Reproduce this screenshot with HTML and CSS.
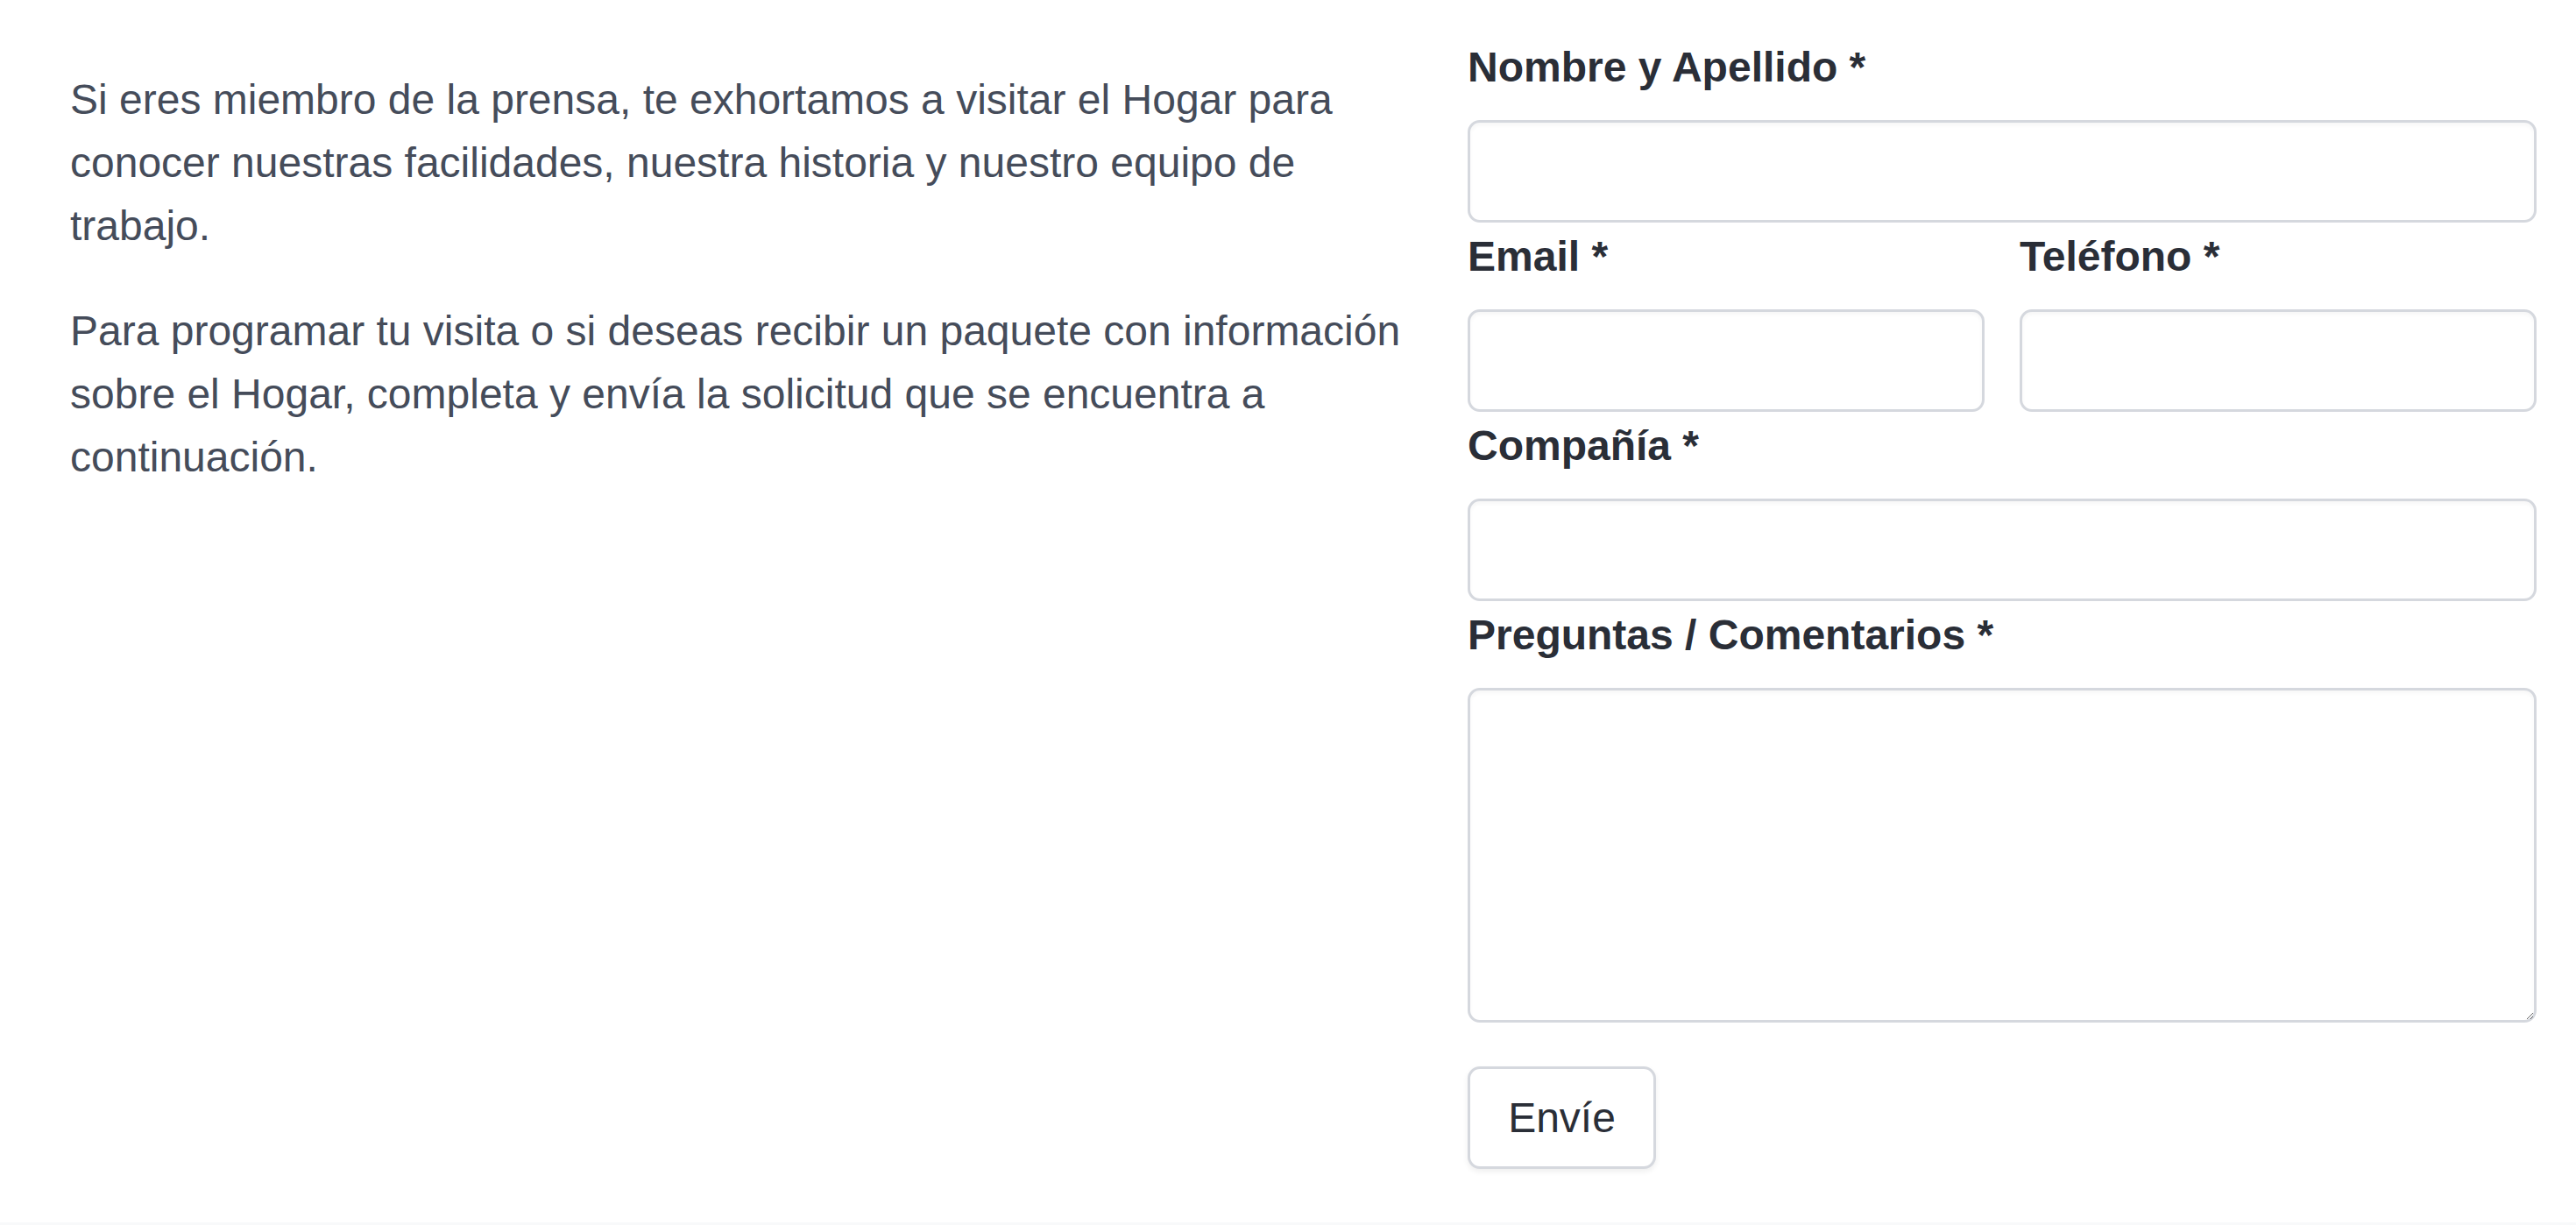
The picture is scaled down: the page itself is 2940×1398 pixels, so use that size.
FILE: index.html
```html
<!DOCTYPE html>
<html lang="es">
<head>
<meta charset="utf-8">
<title>Prensa</title>
<link rel="stylesheet" href="styles.css">
</head>
<body>
<main class="section">
  <div class="intro">
    <p>Si eres miembro de la prensa, te exhortamos a visitar el Hogar para conocer nuestras facilidades, nuestra historia y nuestro equipo de trabajo.</p>
    <p>Para programar tu visita o si deseas recibir un paquete con información sobre el Hogar, completa y envía la solicitud que se encuentra a continuación.</p>
  </div>
  <form class="form" onsubmit="return false;">
    <div class="field">
      <label class="label" for="nombre">Nombre y Apellido *</label>
      <input class="input" id="nombre" type="text">
    </div>
    <div class="row">
      <div class="field">
        <label class="label" for="email">Email *</label>
        <input class="input" id="email" type="email">
      </div>
      <div class="field">
        <label class="label" for="tel">Teléfono *</label>
        <input class="input" id="tel" type="tel">
      </div>
    </div>
    <div class="field">
      <label class="label" for="comp">Compañía *</label>
      <input class="input" id="comp" type="text">
    </div>
    <div class="field">
      <label class="label" for="preg">Preguntas / Comentarios *</label>
      <textarea class="input textarea" id="preg"></textarea>
    </div>
    <div class="actions">
      <button class="button" type="submit">Envíe</button>
    </div>
  </form>
</main>
<footer class="footer"></footer>
</body>
</html>
```
FILE: styles.css
```css
html, body {
  margin: 0;
  padding: 0;
  background: #ffffff;
}

body {
  font-family: "Liberation Sans", Arial, Helvetica, sans-serif;
  color: #2c3039;
}

.section {
  display: flex;
  gap: 40px;
  padding: 0 45px 0 80px;
  height: 1395px;
  box-sizing: border-box;
}

.intro {
  flex: 0 0 1555px;
  padding-top: 78px;
}

.intro p {
  margin: 0 0 48px;
  font-size: 48px;
  line-height: 72px;
  color: #454c5a;
}

.form {
  flex: 0 0 1220px;
  padding-top: 41px;
  display: flex;
  flex-direction: column;
}

.field {
  display: flex;
  flex-direction: column;
  margin-bottom: 3px;
}

.row {
  display: grid;
  grid-template-columns: 1fr 1fr;
  column-gap: 40px;
}

.label {
  display: block;
  font-size: 48px;
  line-height: 72px;
  font-weight: 700;
  color: #2a2e37;
  margin-bottom: 24px;
}

.input {
  box-sizing: border-box;
  width: 100%;
  height: 117px;
  margin: 0;
  padding: 16px 24px;
  border: 3px solid #d5d8de;
  border-radius: 14px;
  background: #ffffff;
  box-shadow: inset 0 3px 4px rgba(0, 0, 0, 0.035);
  font-family: inherit;
  font-size: 48px;
  color: #2c3039;
  outline: none;
}

.textarea {
  height: 382px;
  resize: vertical;
  display: block;
}

.actions {
  margin-top: 47px;
}

.button {
  box-sizing: border-box;
  height: 117px;
  width: 215px;
  padding: 0;
  border: 3px solid #d5d8de;
  border-radius: 14px;
  background: #ffffff;
  box-shadow: 0 3px 6px rgba(0, 0, 0, 0.07);
  font-family: inherit;
  font-size: 48px;
  color: #2a2e37;
  cursor: pointer;
}

.footer {
  height: 60px;
  background: #f8f9fa;
}
```
